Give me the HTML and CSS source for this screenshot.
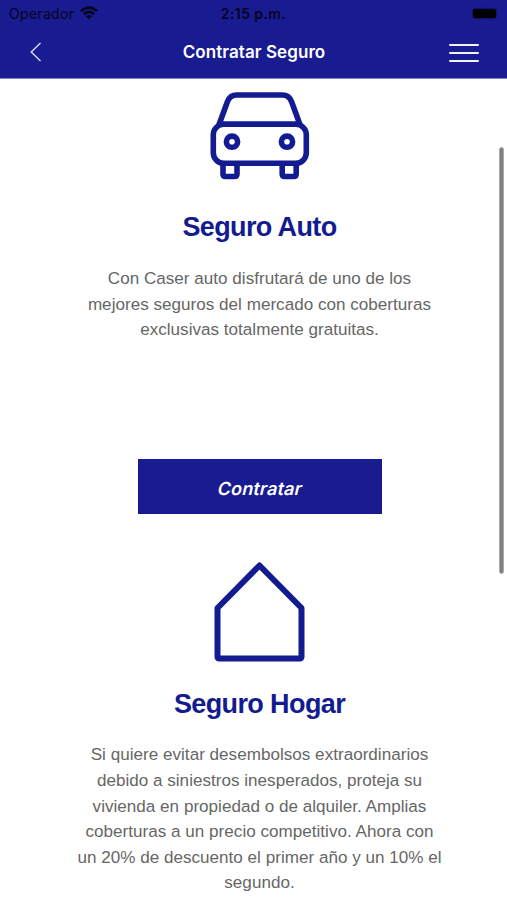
FILE: index.html
```html
<!DOCTYPE html>
<html lang="es">
<head>
<meta charset="utf-8">
<title>Contratar Seguro</title>
<link rel="stylesheet" href="styles.css">
</head>
<body>
<header class="header">
  <div class="status">
    <div class="carrier"><span>Operador</span>
      <svg class="wifi" width="18" height="14" viewBox="0 0 18 14"><g fill="none" stroke="currentColor" stroke-width="2.6"><path d="M1 5.1Q9-2 17 5.1"/><path d="M3.8 8.2Q9 3.6 14.2 8.2"/></g><path d="M6 10.2Q9 7.7 12 10.2L9 13.2Z" fill="currentColor"/></svg>
    </div>
    <time class="clock">2:15 p.m.</time>
    <span class="battery"></span>
  </div>
  <nav class="nav">
    <button class="back" aria-label="Volver"><svg width="12" height="20" viewBox="0 0 12 20"><path d="M10.5 1 1.2 10l9.3 9" fill="none" stroke="currentColor" stroke-width="1.4"/></svg></button>
    <h1 class="nav-title">Contratar Seguro</h1>
    <button class="menu" aria-label="Menú"><span></span><span></span><span></span></button>
  </nav>
</header>
<main class="main">
  <section class="product auto">
    <svg class="icon" width="100" height="88" viewBox="0 0 100 88" fill="none" stroke="currentColor" stroke-width="5.6"><path d="M8.5 34 17.500 9.5Q20 3 26.500 3h46q6.500 0 9 6.500L90.500 34M10 32.300h80"/><rect x="3.300" y="32.300" width="93" height="39" rx="10.500"/><circle cx="22" cy="49.700" r="5.600"/><circle cx="77" cy="49.700" r="5.600"/><path d="M13 72v10q0 2.500 2.500 2.500h9q2.500 0 2.500-2.500V72M72.200 72v10q0 2.500 2.500 2.500h9q2.500 0 2.500-2.500V72"/></svg>
    <h2 class="title">Seguro Auto</h2>
    <p class="text">Con Caser auto disfrutará de uno de los<br>mejores seguros del mercado con coberturas<br>exclusivas totalmente gratuitas.</p>
    <button class="cta"><span class="cta-label">Contratar</span></button>
  </section>
  <section class="product home">
    <svg class="icon" width="92" height="100" viewBox="0 0 92 100"><path d="M45.500 3.500 87.500 46V95a1.500 1.500 0 0 1-1.500 1.500H5A1.500 1.500 0 0 1 3.500 95V46Z" fill="none" stroke="currentColor" stroke-width="6" stroke-linejoin="round"/></svg>
    <h2 class="title">Seguro Hogar</h2>
    <p class="text">Si quiere evitar desembolsos extraordinarios<br>debido a siniestros inesperados, proteja su<br>vivienda en propiedad o de alquiler. Amplias<br>coberturas a un precio competitivo. Ahora con<br>un 20% de descuento el primer año y un 10% el<br>segundo.</p>
  </section>
</main>
<div class="scrollbar"></div>
</body>
</html>
```
FILE: styles.css
```css
* { box-sizing: border-box; }
body { margin: 0; height: 900px; overflow: hidden; background: #fff; font-family: "Liberation Sans", Arial, sans-serif; }
h1, h2, p { margin: 0; }
button { border: 0; padding: 0; background: none; color: inherit; font: inherit; }
svg { display: block; }
.header { height: 79px; background: #191b90; border-bottom: 1px solid #7c86cc; font-family: Inter, sans-serif; }
.status { height: 28px; display: grid; grid-template-columns: 1fr auto 1fr; align-items: center; padding: 0 11px 0 9px; color: #05051c; }
.carrier { display: flex; align-items: center; gap: 6px; font-size: 14px; line-height: 28px; letter-spacing: 0.3px; }
.wifi { margin-top: -2px; }
.clock { font-size: 14px; font-weight: 600; line-height: 28px; letter-spacing: 0.4px; margin-left: 2px; }
.battery { justify-self: end; width: 23px; height: 9px; margin-top: -1px; border-radius: 2px; background: #000; box-shadow: 0 0 2px #000; }
.nav { height: 48px; display: grid; grid-template-columns: 1fr auto 1fr; align-items: center; padding: 0 28px 0 30px; color: #fff; }
.back { width: 12px; height: 20px; color: #d8dcff; }
.nav-title { font-size: 17px; font-weight: 600; line-height: 24px; letter-spacing: 0.07px; margin-right: 1px; }
.menu { justify-self: end; width: 30px; display: flex; flex-direction: column; gap: 6px; }
.menu span { height: 2px; border-radius: 1px; background: #f0f1ff; }
.main { margin-left: 12px; }
.product { display: flex; flex-direction: column; align-items: center; color: #131b90; }
.auto { padding-top: 13px; height: 483px; }
.title { font-size: 27px; line-height: 32px; font-weight: 700; letter-spacing: -0.62px; }
.auto .title { margin-top: 31px; }
.home .title { margin-top: 26px; }
.text { margin-top: 23px; font-size: 17.07px; line-height: 25.6px; letter-spacing: 0.02px; text-align: center; white-space: nowrap; color: #666; }
.home .text { margin-top: 22.4px; }
.cta { width: 244px; height: 55px; margin-top: 116px; background: #191b90; color: #fff; font: 600 18px/60px Inter, sans-serif; letter-spacing: 0.15px; }
.cta-label { display: inline-block; margin-left: 2px; transform: skewX(-13deg); }
.scrollbar { position: absolute; left: 499px; top: 147px; width: 5px; height: 427px; border-radius: 2.5px; background: #808080; border: 0.5px solid #aaa; }
.menu { margin-top: 1px; }
```
